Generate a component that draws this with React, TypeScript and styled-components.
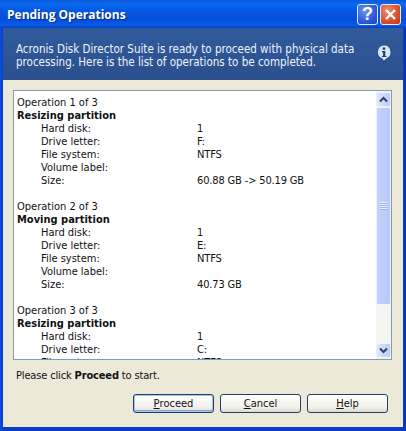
import styled, { createGlobalStyle } from "styled-components";

const operations = [
  {
    title: "Operation 1 of 3",
    action: "Resizing partition",
    details: [
      ["Hard disk:", "1"],
      ["Drive letter:", "F:"],
      ["File system:", "NTFS"],
      ["Volume label:", ""],
      ["Size:", "60.88 GB -> 50.19 GB"],
    ],
  },
  {
    title: "Operation 2 of 3",
    action: "Moving partition",
    details: [
      ["Hard disk:", "1"],
      ["Drive letter:", "E:"],
      ["File system:", "NTFS"],
      ["Volume label:", ""],
      ["Size:", "40.73 GB"],
    ],
  },
  {
    title: "Operation 3 of 3",
    action: "Resizing partition",
    details: [
      ["Hard disk:", "1"],
      ["Drive letter:", "C:"],
      ["File system:", "NTFS"],
    ],
  },
];

function App() {
  return (
    <>
      <GlobalStyle />
      <Window>
        <TitleBar>
          <Title>Pending Operations</Title>
          <CaptionButton>?</CaptionButton>
          <CaptionButton $close>
            <svg width="13" height="13" viewBox="0 0 13 13">
              <path d="M2 2l9 9M11 2l-9 9" stroke="#fff" strokeWidth="2.4" />
            </svg>
          </CaptionButton>
        </TitleBar>
        <Banner>
          <BannerText>
            Acronis Disk Director Suite is ready to proceed with physical data
            processing. Here is the list of operations to be completed.
          </BannerText>
          <InfoIcon width="14" height="16" viewBox="0 0 15 17">
            <path d="M7.5 0.5a7 7 0 0 1 2.5 13.5l-2.5 2.5-2-2.5a7 7 0 0 1 2-13.5z" fill="#dce8f8" />
            <circle cx="7.5" cy="3.8" r="1.5" fill="#1c3f7c" />
            <path d="M5.3 6.4h3.6v5.2h1.2v1.2H5.3v-1.2h1.2V7.6H5.3z" fill="#1c3f7c" />
          </InfoIcon>
        </Banner>
        <Body>
          <ListBox>
            <List>
              {operations.map((op) => (
                <Operation key={op.title}>
                  <div>{op.title}</div>
                  <Action>{op.action}</Action>
                  {op.details.map(([label, value]) => (
                    <DetailRow key={label}>
                      <span>{label}</span>
                      <DetailValue>{value}</DetailValue>
                    </DetailRow>
                  ))}
                </Operation>
              ))}
            </List>
            <ScrollBar>
              <ScrollButton>
                <svg width="9" height="7" viewBox="0 0 9 7">
                  <path d="M1 5.5l3.5-3.5 3.5 3.5" fill="none" stroke="#2c4570" strokeWidth="2" />
                </svg>
              </ScrollButton>
              <Thumb>
                <Grip />
              </Thumb>
              <Track />
              <ScrollButton>
                <svg width="9" height="7" viewBox="0 0 9 7">
                  <path d="M1 1.5l3.5 3.5 3.5-3.5" fill="none" stroke="#2c4570" strokeWidth="2" />
                </svg>
              </ScrollButton>
            </ScrollBar>
          </ListBox>
          <Hint>
            Please click <b>Proceed</b> to start.
          </Hint>
          <Buttons>
            <Button $primary>
              <u>P</u>roceed
            </Button>
            <Button>
              <u>C</u>ancel
            </Button>
            <Button>
              <u>H</u>elp
            </Button>
          </Buttons>
        </Body>
      </Window>
    </>
  );
}

export default App;

const GlobalStyle = createGlobalStyle`
  html, body {
    margin: 0;
    padding: 0;
    background: #0a3ec8;
  }
  body {
    font-family: "DejaVu Sans Condensed", "DejaVu Sans", sans-serif;
    font-size: 11px;
    color: #111;
  }
`;

const Window = styled.div`
  width: 406px;
  height: 431px;
  display: flex;
  flex-direction: column;
  box-sizing: border-box;
  padding: 0 3px 4px;
  overflow: hidden;
  background: linear-gradient(90deg, #0a50e0 0, #0a3ec8 3px, #0a3ec8 403px, #0331b0 406px);
`;

const TitleBar = styled.div`
  height: 28px;
  margin: 0 -3px;
  padding: 0 5px 0 7px;
  flex: none;
  display: flex;
  align-items: center;
  gap: 2px;
  box-sizing: border-box;
  background: linear-gradient(180deg, #0a57d8 0, #0a6af0 4px, #0559e4 10px, #0450d8 20px, #0a5cec 25px, #0340c0 28px);
`;

const Title = styled.div`
  flex: 1;
  color: #fff;
  font-family: "Open Sans", sans-serif;
  font-size: 12px;
  font-weight: 700;
  text-shadow: 1px 1px 1px #0a2c80;
`;

const CaptionButton = styled.div<{ $close?: boolean }>`
  width: 21px;
  height: 21px;
  display: flex;
  align-items: center;
  justify-content: center;
  box-sizing: border-box;
  border: 1px solid #e4ecfa;
  border-radius: 3px;
  color: #fff;
  font-family: "Liberation Sans", sans-serif;
  font-size: 18px;
  font-weight: 700;
  background: ${(p) =>
    p.$close
      ? "radial-gradient(circle at 35% 30%, #ec9070, #d8502c 60%, #b83818)"
      : "radial-gradient(circle at 35% 30%, #6c94ec, #2c5ad8 60%, #1a44c0)"};
`;

const Banner = styled.div`
  height: 52px;
  flex: none;
  display: flex;
  align-items: center;
  justify-content: space-between;
  box-sizing: border-box;
  padding: 0 12px 0 13px;
  color: #f0f4fa;
  background: linear-gradient(180deg, #315b9c, #2a4f8e);
`;

const BannerText = styled.div`
  width: 340px;
  padding-top: 3px;
  line-height: 13px;
  font-size: 11.5px;
`;

const InfoIcon = styled.svg`
  margin-bottom: 2px;
`;

const Body = styled.div`
  flex: 1;
  min-height: 0;
  display: flex;
  flex-direction: column;
  box-sizing: border-box;
  padding: 10px 11px 0 10px;
  background: #ece9d8;
`;

const ListBox = styled.div`
  height: 270px;
  flex: none;
  display: flex;
  box-sizing: border-box;
  border: 1px solid #7f9db9;
  background: #fff;
  overflow: hidden;
`;

const List = styled.div`
  flex: 1;
  min-width: 0;
  padding: 5px 0 0 3px;
  line-height: 13px;
  overflow: hidden;
`;

const Operation = styled.div`
  margin-bottom: 13px;
`;

const Action = styled.div`
  font-weight: 700;
`;

const DetailRow = styled.div`
  display: grid;
  grid-template-columns: 156px 1fr;
  padding-left: 24px;
`;

const DetailValue = styled.span`
  letter-spacing: -0.15px;
`;

const ScrollBar = styled.div`
  width: 15px;
  flex: none;
  display: flex;
  flex-direction: column;
  padding: 1px 0;
  background: #f4f5f2;
`;

const ScrollButton = styled.div`
  height: 15px;
  flex: none;
  display: flex;
  align-items: center;
  justify-content: center;
  box-sizing: border-box;
  border: 1px solid #eef2fb;
  border-radius: 2px;
  background: linear-gradient(90deg, #dfe7fb, #bccdf6);
`;

const Thumb = styled.div`
  height: 198px;
  flex: none;
  display: flex;
  align-items: center;
  justify-content: center;
  box-sizing: border-box;
  border: 1px solid #eef2fb;
  border-radius: 2px;
  background: linear-gradient(90deg, #c4d2fa, #b8c9f8);
`;

const Grip = styled.div`
  width: 7px;
  height: 8px;
  background: repeating-linear-gradient(180deg, #eef2fe 0, #eef2fe 1px, #9db3e8 1px, #9db3e8 2px);
`;

const Track = styled.div`
  flex: 1;
  background: #f4f6f1;
`;

const Hint = styled.div`
  margin: 9px 0 0 3px;
  line-height: 13px;
  letter-spacing: -0.15px;
`;

const Buttons = styled.div`
  margin-top: 12px;
  margin-left: 120px;
  display: flex;
  gap: 6px;
`;

const Button = styled.div<{ $primary?: boolean }>`
  width: 81px;
  height: 19px;
  display: flex;
  align-items: center;
  justify-content: center;
  box-sizing: border-box;
  border: 1px solid #1e3f6c;
  border-radius: 3px;
  background: linear-gradient(180deg, #fff, #f2f1ea 70%, #dcd8cc);
  box-shadow: ${(p) =>
    p.$primary ? "inset 0 0 0 1px #a8c4ec, inset 0 -1px 0 1px #8cacdc" : "none"};
`;
